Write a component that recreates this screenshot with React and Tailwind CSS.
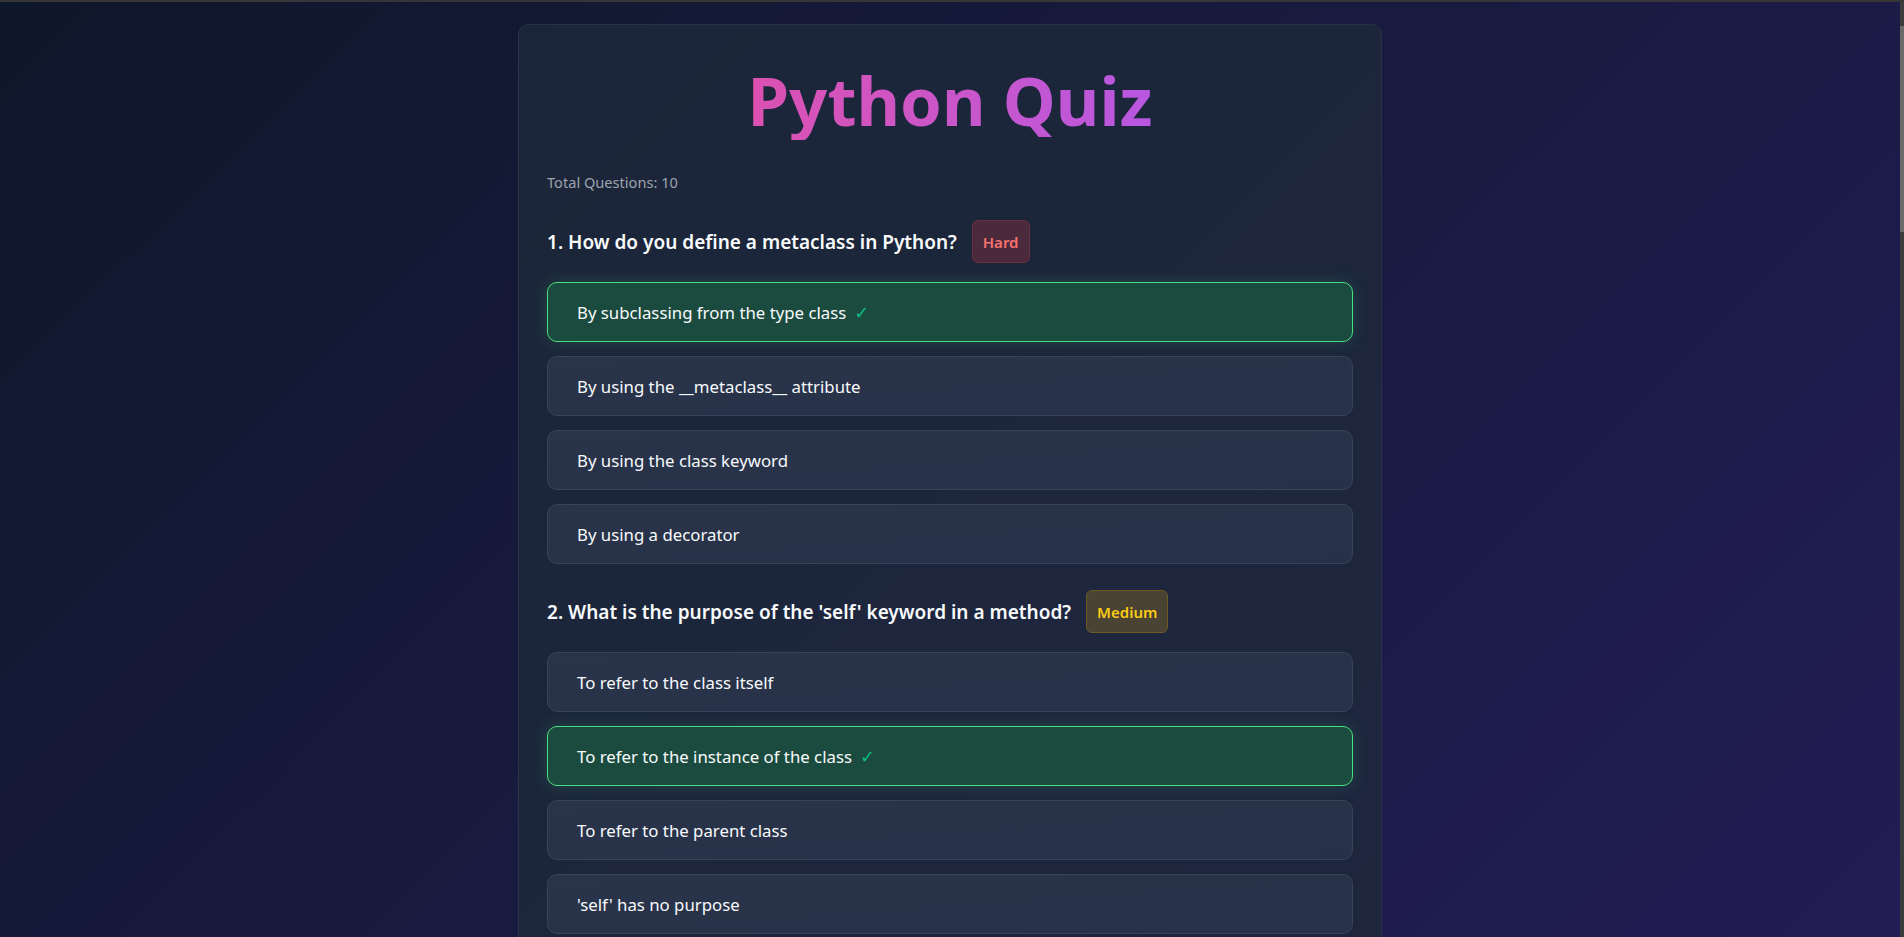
import React from "react";

const questions = [
  {
    q: "How do you define a metaclass in Python?",
    d: "Hard",
    opts: [
      "By subclassing from the type class",
      "By using the __metaclass__ attribute",
      "By using the class keyword",
      "By using a decorator",
    ],
    correct: 0,
  },
  {
    q: "What is the purpose of the 'self' keyword in a method?",
    d: "Medium",
    opts: [
      "To refer to the class itself",
      "To refer to the instance of the class",
      "To refer to the parent class",
      "'self' has no purpose",
    ],
    correct: 1,
  },
  {
    q: "Which of the following is a mutable data type?",
    d: "Easy",
    opts: ["tuple", "str", "list", "frozenset"],
    correct: 2,
  },
  {
    q: "What does the 'yield' keyword do in a function?",
    d: "Medium",
    opts: [
      "It returns a value and exits the function",
      "It turns the function into a generator",
      "It raises an exception",
      "It pauses the interpreter",
    ],
    correct: 1,
  },
];

const badge = {
  Hard: "bg-[#4a2a3b] border-[#6b2f3d] text-[#f87171]",
  Medium: "bg-[#4a4232] border-[#6b5a24] text-[#facc15]",
  Easy: "bg-[#1e4a3c] border-[#22634a] text-[#4ade80]",
};

function Option({ text, correct }) {
  return correct ? (
    <div className="flex h-[60px] items-center rounded-[10px] border border-[#4ade80] bg-[#1b4b3e] px-[29px] text-[16.8px] text-[#f8fafc] shadow-[0_0_16px_rgba(74,222,128,0.18)]">
      <span>{text}</span>
      <span className="ml-[8px] text-[18px] leading-none text-[#10b981]">✓</span>
    </div>
  ) : (
    <div className="flex h-[60px] items-center rounded-[10px] border border-[#384357] bg-linear-to-br from-[#293449] to-[#27314a] px-[29px] text-[16.8px] text-[#f8fafc]">
      <span>{text}</span>
    </div>
  );
}

function Question({ item, index }) {
  return (
    <div>
      <div className="flex h-[43px] items-center gap-[15px]">
        <h2 className="text-[19px] font-semibold text-[#f8fafc]">
          {index + 1}. {item.q}
        </h2>
        <span
          className={
            "flex h-[43px] items-center rounded-[6px] border px-[10px] text-[15px] font-semibold " +
            badge[item.d]
          }
        >
          {item.d}
        </span>
      </div>
      <div className="mt-[19px] flex flex-col gap-[14px]">
        {item.opts.map((o, i) => (
          <Option key={i} text={o} correct={i === item.correct} />
        ))}
      </div>
    </div>
  );
}

export default function App() {
  return (
    <div
      className="flex h-screen flex-col overflow-hidden bg-[#363636]"
      style={{ fontFamily: '"Noto Sans", "Open Sans", "DejaVu Sans", sans-serif' }}
    >
      <div className="mt-[2px] flex min-h-0 flex-1">
        <div className="min-w-0 flex-1 overflow-hidden bg-[linear-gradient(135deg,#0f172a,#221d55)] pt-[22px]">
          <div className="mx-auto w-[864px] rounded-[10px] border border-[#283146] bg-[#1e293b]/80 px-[28px] pt-[29px] pb-[40px]">
            <h1 className="mt-[6px] bg-linear-to-r from-[#ec4899] to-[#a855f7] bg-clip-text text-center text-[67px] leading-[1.2] font-bold text-transparent">
              Python Quiz
            </h1>
            <p className="mt-[32px] text-[14.6px] leading-[20px] text-[#9ca3af]">
              Total Questions: 10
            </p>
            <div className="mt-[28px] flex flex-col gap-[26px]">
              {questions.map((item, i) => (
                <Question key={i} item={item} index={i} />
              ))}
            </div>
          </div>
        </div>
        <div className="w-[4px] shrink-0 bg-[#3c3c3c] pt-[24px]">
          <div className="h-[206px] bg-[#6b6b6b]" />
        </div>
      </div>
    </div>
  );
}
